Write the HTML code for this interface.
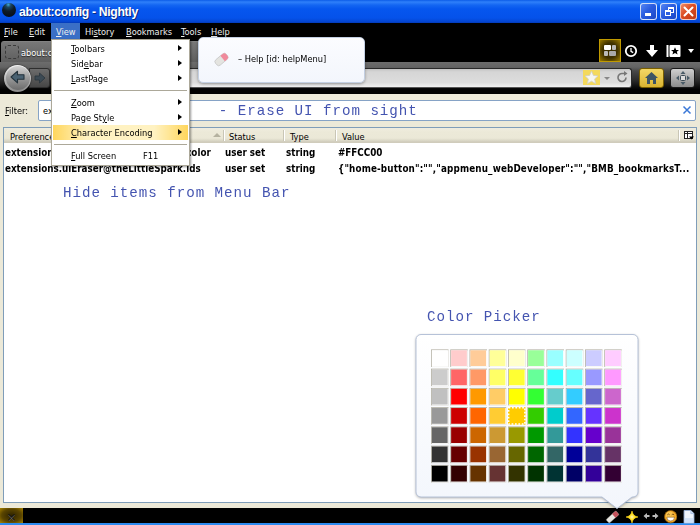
<!DOCTYPE html>
<html><head><meta charset="utf-8">
<style>
*{box-sizing:border-box;margin:0;padding:0}
html,body{width:700px;height:525px;overflow:hidden;background:#ece9d8;font-family:"DejaVu Sans Condensed","Liberation Sans",sans-serif;}
body{position:relative}
.abs{position:absolute}
#title{left:0;top:0;width:700px;height:23px;background:linear-gradient(#0c5ce8 0,#2f80fa 2px,#1466f2 5px,#0656ee 9px,#0552ea 18px,#0444d0 22px,#0338b0 23px)}
#title .t{left:19px;top:3.500px;font-family:"Liberation Sans",sans-serif;color:#fff;font-weight:bold;font-size:12.200px;letter-spacing:-0.320px;line-height:16px;white-space:nowrap;text-shadow:1px 1px 0 #0a2a80}
#menubar{left:0;top:23px;width:700px;height:17px;background:#000}
.mi{top:24px;height:16px;line-height:16px;color:#eee;font-size:9.2px;white-space:nowrap}
.mi u,.dm u{text-decoration:underline;text-underline-offset:1px}
#tabrow{left:0;top:40px;width:700px;height:22px;background:#000}
#tab{left:1px;top:41px;width:219px;height:21px;background:linear-gradient(#8c8c8c 0,#787878 1px,#5e5e5e 100%);border-radius:3px 3px 0 0}
#nav{left:0;top:62px;width:700px;height:31.500px;background:linear-gradient(#6c6c6c 0,#646464 5px,#484848 9px,#2c2c2c 18px,#0c0c0c 25px,#000 28px)}
#url{left:56px;top:67.500px;width:576px;height:20.500px;border-radius:3px;background:linear-gradient(#c4c4c4 0,#d6d6d6 3px,#dcdcdc 75%,#f0f0f0 100%);border:1px solid #2a2a2a;border-bottom-color:#555}
.dm{position:absolute;left:71px;font-size:9.2px;color:#000;white-space:nowrap;line-height:12px}
.arr{position:absolute;left:178px;width:0;height:0;border-left:4px solid #000;border-top:3.5px solid transparent;border-bottom:3.5px solid transparent}
.note{position:absolute;font-family:"Liberation Mono",monospace;font-size:14.2px;letter-spacing:0.960px;color:#4454b0;white-space:nowrap;line-height:18px}
.th{position:absolute;top:130.800px;font-size:9.2px;color:#000;line-height:12px}
.td{position:absolute;font-size:9.75px;font-weight:bold;color:#000;line-height:12px;white-space:nowrap}
.sep{position:absolute;top:130px;width:1px;height:11px;background:#c9c6b6;border-right:1px solid #fff;width:2px}
.cc{position:absolute;width:18px;height:18px;border:1px solid;border-color:#a9a69a #fff #fff #a9a69a}
.cc.sel{border:1.5px dotted #fff;}
</style></head><body><div id="ui" class="abs" style="left:0;top:0;width:700px;height:525px;filter:blur(0.45px)">

<!-- title bar -->
<div id="title" class="abs">
  <div class="abs" style="left:2px;top:3px;width:14px;height:14px;border-radius:50%;background:radial-gradient(circle at 45% 12%,#3fa8d8 0,#1c4660 18%,#0e1c2a 45%,#060a12 100%)"></div>
  <div class="abs t">about:config - Nightly</div>
  <!-- window buttons -->
  <div class="abs" style="left:640px;top:2.500px;width:17px;height:17px;border-radius:3px;border:1px solid rgba(255,255,255,.8);background:linear-gradient(135deg,#5686f4,#2a5ce0 45%,#1c48c6)"><div class="abs" style="left:3.500px;top:9px;width:6.500px;height:3px;background:#fff"></div></div>
  <div class="abs" style="left:660px;top:2.500px;width:17px;height:17px;border-radius:3px;border:1px solid rgba(255,255,255,.8);background:linear-gradient(135deg,#5686f4,#2a5ce0 45%,#1c48c6)">
    <div class="abs" style="left:6.500px;top:3px;width:6px;height:6px;border:1px solid #fff;border-top-width:2px"></div>
    <div class="abs" style="left:3.500px;top:6px;width:6px;height:6px;border:1px solid #fff;border-top-width:2px;background:#2c5fe0"></div>
  </div>
  <div class="abs" style="left:680px;top:2.500px;width:17px;height:17px;border-radius:3px;border:1px solid rgba(255,235,225,.75);background:linear-gradient(135deg,#ee8a66,#dc4c22 45%,#be3a16)">
    <svg class="abs" style="left:0;top:0" width="15" height="15" viewBox="0 0 15 15"><path d="M3.500 3.500L11.500 11.500M11.500 3.500L3.500 11.500" stroke="#fff" stroke-width="2" stroke-linecap="round"/></svg>
  </div>
</div>

<!-- menubar -->
<div id="menubar" class="abs"></div>
<div class="abs" style="left:51px;top:23px;width:29px;height:16px;background:#3a6fc6"></div>
<div class="abs mi" style="left:4px"><u>F</u>ile</div>
<div class="abs mi" style="left:29px"><u>E</u>dit</div>
<div class="abs mi" style="left:56px"><u>V</u>iew</div>
<div class="abs mi" style="left:85px">Hi<u>s</u>tory</div>
<div class="abs mi" style="left:126px"><u>B</u>ookmarks</div>
<div class="abs mi" style="left:181px"><u>T</u>ools</div>
<div class="abs mi" style="left:211px"><u>H</u>elp</div>

<!-- tab row -->
<div id="tabrow" class="abs"></div>
<div id="tab" class="abs">
  <div class="abs" style="left:4px;top:4px;width:13.500px;height:13.500px;border:1px dashed #3a3a3a;border-radius:3px"></div>
  <div class="abs" style="left:20px;top:4.500px;color:#fff;font-size:9.2px;line-height:14px;text-shadow:0 1px 1px #222">about:config</div>
</div>
<!-- tab row icons -->
<div class="abs" style="left:599px;top:39px;width:22px;height:23px;background:radial-gradient(ellipse at center,#3a2e00 0,#3e3000 50%,#9a7a00 100%);border:1px solid #c09a00"></div>
<svg class="abs" style="left:603px;top:44px" width="14" height="14" viewBox="0 0 14 14"><rect x="1" y="1" width="7" height="5" rx="1" fill="#fff"/><rect x="9" y="1" width="4" height="5" rx="1" fill="#bbb"/><rect x="1" y="7" width="4" height="5" rx="1" fill="#bbb"/><rect x="6" y="7" width="7" height="5" rx="1" fill="#aaa"/></svg>
<svg class="abs" style="left:624px;top:44px" width="14" height="14" viewBox="0 0 14 14"><circle cx="7" cy="7" r="5.2" fill="none" stroke="#fff" stroke-width="1.8"/><path d="M7 4V7.3L9.2 8.6" stroke="#fff" stroke-width="1.3" fill="none"/></svg>
<svg class="abs" style="left:645px;top:44px" width="14" height="14" viewBox="0 0 14 14"><path d="M5 1H9V6H13L7 13L1 6H5Z" fill="#fff"/></svg>
<svg class="abs" style="left:666px;top:44px" width="15" height="14" viewBox="0 0 15 14"><rect x="0.5" y="1" width="2" height="12" fill="#fff"/><rect x="3.5" y="1" width="11" height="12" rx="1" fill="#fff"/><path d="M9 3.2L10.2 6H13L10.8 7.8L11.6 10.6L9 9L6.4 10.6L7.2 7.8L5 6H7.8Z" fill="#000"/></svg>
<div class="abs" style="left:688px;top:49px;width:0;height:0;border-top:4px solid #fff;border-left:3.5px solid transparent;border-right:3.5px solid transparent"></div>

<!-- nav bar -->
<div id="nav" class="abs"></div>
<div id="url" class="abs"></div>
<!-- forward btn -->
<div class="abs" style="left:29px;top:68px;width:21px;height:19.500px;border-radius:0 3px 3px 0;background:linear-gradient(#6c6c6c,#464646);border:1px solid #2e2e2e"></div>
<svg class="abs" style="left:33.500px;top:71.500px" width="12" height="12" viewBox="0 0 12 12"><path d="M1 4H5.500V1L11 6L5.500 11V8H1Z" fill="#3c4a54" stroke="#2a353d" stroke-width="0.800" stroke-linejoin="round"/></svg>
<!-- back btn -->
<div class="abs" style="left:4px;top:64.500px;width:27px;height:27px;border-radius:50%;background:linear-gradient(#f4f4f4,#b0b0b0 60%,#8a8a8a);box-shadow:0 0 1.500px #000"></div><div class="abs" style="left:5.500px;top:66px;width:24px;height:24px;border-radius:50%;background:linear-gradient(#d4d4d4,#9a9a9a 50%,#6c6c6c)"></div>
<svg class="abs" style="left:10px;top:70px" width="15" height="14" viewBox="0 0 15 14"><path d="M14 4.800H7.500V1.200L1 7L7.500 12.800V9.200H14Z" fill="#4a6272" stroke="#25333c" stroke-width="1.100" stroke-linejoin="round"/></svg>
<!-- url bar right -->
<div class="abs" style="left:583px;top:70px;width:17px;height:15px;background:#f4d95c"></div>
<svg class="abs" style="left:584px;top:70px" width="15" height="15" viewBox="0 0 15 15"><path d="M7.5 1.2L9.4 5.4L14 5.9L10.6 9L11.6 13.6L7.5 11.2L3.4 13.6L4.4 9L1 5.9L5.6 5.4Z" fill="#f6f6f0" stroke="#cfcfc8" stroke-width="0.8"/></svg>
<div class="abs" style="left:604px;top:77px;width:0;height:0;border-top:3px solid #888;border-left:3px solid transparent;border-right:3px solid transparent"></div>
<svg class="abs" style="left:616px;top:71px" width="13" height="13" viewBox="0 0 13 13"><path d="M10 6.5A4 4 0 1 1 6.5 2.5H9" fill="none" stroke="#777" stroke-width="1.6"/><path d="M8 0V5L11.5 2.5Z" fill="#777"/></svg>
<!-- home -->
<div class="abs" style="left:639px;top:68px;width:25px;height:20px;border-radius:3px;background:linear-gradient(#f3d766,#d9b332);border:1px solid #7a5f00"></div>
<svg class="abs" style="left:644px;top:71px" width="15" height="14" viewBox="0 0 15 14"><path d="M7.5 1L14 7H12V13H9V9H6V13H3V7H1Z" fill="#3d5465"/></svg>
<!-- move -->
<div class="abs" style="left:670px;top:68px;width:25px;height:20px;border-radius:3px;background:linear-gradient(#cfcfcf,#8c8c8c);border:1px solid #1a1a1a"></div>
<svg class="abs" style="left:675px;top:70px" width="16" height="16" viewBox="0 0 16 16"><path d="M8 1L10.5 4H5.5ZM8 15L5.5 12H10.5ZM1 8L4 5.5V10.5ZM15 8L12 10.5V5.5Z" fill="#4a5c68"/><rect x="5.500" y="5.500" width="5" height="5" rx="1" fill="#dcdcdc" stroke="#3a4a55"/></svg>

<!-- content -->
<div class="abs" style="left:5px;top:105px;font-size:9.2px;line-height:12px;color:#000"><u>F</u>ilter:</div>
<div class="abs" style="left:38px;top:100px;width:658px;height:21px;background:#fff;border:1px solid #86a3c6;border-radius:2px"></div>
<div class="abs" style="left:43px;top:105px;font-size:9.2px;line-height:12px;color:#000">extensions</div>
<svg class="abs" style="left:682px;top:105px" width="10" height="10" viewBox="0 0 10 10"><path d="M1.5 1.5L8.5 8.5M8.5 1.5L1.5 8.5" stroke="#3a78d8" stroke-width="1.5"/></svg>

<!-- tree -->
<div class="abs" style="left:3px;top:127px;width:694px;height:376px;background:#fff;border:1px solid #7f9db9"></div>
<div class="abs" style="left:4px;top:128px;width:692px;height:15px;background:linear-gradient(#efecdf 0,#ece9d8 30%,#ebe8d7 72%,#dedbca 86%,#cfcbbb 100%);border-bottom:1px solid #d0ccbc"></div>
<div class="th" style="left:10px">Preference Name</div>
<div class="abs" style="left:213px;top:133px;width:0;height:0;border-bottom:4px solid #b5b2a0;border-left:4px solid transparent;border-right:4px solid transparent"></div>
<div class="sep" style="left:223px"></div><div class="th" style="left:229px">Status</div>
<div class="sep" style="left:283px"></div><div class="th" style="left:290px">Type</div>
<div class="sep" style="left:335px"></div><div class="th" style="left:342px">Value</div>
<div class="sep" style="left:677.500px"></div>
<svg class="abs" style="left:684px;top:131px" width="10" height="10" viewBox="0 0 10 10"><rect x="0.5" y="0.5" width="8" height="7" fill="#fff" stroke="#222"/><path d="M0.5 2.5H8.5M3.5 0.5V7.5" stroke="#222" stroke-width="1"/><path d="M5 5.5H10L7.5 8.5Z" fill="#000"/></svg>

<div class="td" style="left:5px;top:146.700px">extensions.uiEraser@theLittleSpark.color</div>
<div class="td" style="left:225px;top:146.700px">user set</div>
<div class="td" style="left:286px;top:146.700px">string</div>
<div class="td" style="left:338px;top:146.700px">#FFCC00</div>
<div class="td" style="left:5px;top:162.700px">extensions.uiEraser@theLittleSpark.ids</div>
<div class="td" style="left:225px;top:162.700px">user set</div>
<div class="td" style="left:286px;top:162.700px">string</div>
<div class="td" style="left:338px;top:162.700px;letter-spacing:0.150px">{"home-button":"","appmenu_webDeveloper":"","BMB_bookmarksT...</div>

<!-- notes -->

<!-- dropdown menu -->
<div class="abs" style="left:51px;top:39px;width:139px;height:127px;background:#fff;border:1px solid #aca899;box-shadow:1px 1px 2px rgba(0,0,0,.4)"></div>
<div class="abs" style="left:53px;top:125.300px;width:135px;height:14.300px;background:linear-gradient(90deg,#ffd65c,#fff2c2 25%,#fff2c2 75%,#ffd65c)"></div>
<div class="abs" style="left:54px;top:90px;width:133px;height:1px;background:#aca899"></div>
<div class="abs" style="left:54px;top:144px;width:133px;height:1px;background:#aca899"></div>
<div class="dm" style="top:43px"><u>T</u>oolbars</div><div class="arr" style="top:45px"></div>
<div class="dm" style="top:57.800px">Sid<u>e</u>bar</div><div class="arr" style="top:60px"></div>
<div class="dm" style="top:73px"><u>L</u>astPage</div><div class="arr" style="top:75px"></div>
<div class="dm" style="top:97px"><u>Z</u>oom</div><div class="arr" style="top:99px"></div>
<div class="dm" style="top:112px">Page St<u>y</u>le</div><div class="arr" style="top:114px"></div>
<div class="dm" style="top:127px"><u>C</u>haracter Encoding</div><div class="arr" style="top:129px"></div>
<div class="dm" style="top:150px"><u>F</u>ull Screen</div>
<div class="dm" style="top:150px;left:143px">F11</div>

<!-- help tooltip panel -->
<div class="abs" style="left:198px;top:36.500px;width:167px;height:46px;border-radius:5px;background:linear-gradient(#fbfcff,#f3f6fc);border:1px solid #c3cfe2;box-shadow:0 1px 3px rgba(0,0,0,.35)"></div>
<svg class="abs" style="left:213px;top:51px" width="17" height="17" viewBox="0 0 17 17"><g transform="rotate(-40 8.5 8.5)"><rect x="1.5" y="5" width="14" height="7" rx="2.5" fill="#e4e4e0" stroke="#bbb" stroke-width="0.6"/><path d="M10 5H13A2.5 2.5 0 0 1 15.5 7.5V9.5A2.5 2.5 0 0 1 13 12H10Z" fill="#f08a9c"/></g></svg>
<div class="abs" style="left:238px;top:53px;font-size:9.2px;line-height:12px;color:#000;white-space:nowrap">– Help [id: helpMenu]</div>

<!-- status bar -->
<div class="abs" style="left:0;top:508px;width:700px;height:15px;background:#000"></div>
<div class="abs" style="left:0;top:523px;width:700px;height:2px;background:#2d8cf0"></div>
<div class="abs" style="left:0;top:508px;width:23px;height:15px;background:radial-gradient(ellipse at center,#2e2300 0,#5a4500 60%,#a88400 100%)"></div>
<svg class="abs" style="left:8px;top:514px" width="7" height="7" viewBox="0 0 7 7"><path d="M0.5 0.5L6.5 6.5M6.5 0.5L0.5 6.5" stroke="#111" stroke-width="1.4"/><path d="M0.5 1.2L6.5 7.2M6.5 1.2L0.5 7.2" stroke="#999" stroke-width="0.5"/></svg>

<!-- color picker panel -->
<svg class="abs" style="left:406px;top:326px;overflow:visible" width="244" height="190" viewBox="406 326 244 190">
<defs><linearGradient id="pg" x1="0" y1="0" x2="0" y2="1"><stop offset="0" stop-color="#ffffff"/><stop offset="1" stop-color="#f3f6fc"/></linearGradient>
<filter id="sh" x="-10%" y="-10%" width="120%" height="125%"><feGaussianBlur stdDeviation="1.6"/></filter></defs>
<path d="M421 334.5H633A5 5 0 0 1 638 339.5V492A5 5 0 0 1 633 497H632L617 508.500L602 497H421A5 5 0 0 1 416 492V339.5A5 5 0 0 1 421 334.5Z" fill="#000" opacity="0.35" filter="url(#sh)" transform="translate(0,1)"/>
<path d="M421 334.5H633A5 5 0 0 1 638 339.5V492A5 5 0 0 1 633 497H632L617 508.500L602 497H421A5 5 0 0 1 416 492V339.5A5 5 0 0 1 421 334.5Z" fill="url(#pg)" stroke="#b6c2d8" stroke-width="1"/>
</svg>
<svg class="abs" style="left:0;top:0" width="700" height="525" viewBox="0 0 700 525">
<rect x="431.00" y="349.40" width="17.5" height="17.5" fill="#b5b2a6"/><rect x="431.88" y="350.28" width="16.62" height="16.62" fill="#fff"/><rect x="431.88" y="350.28" width="15.75" height="15.75" fill="#FFFFFF"/>
<rect x="450.25" y="349.40" width="17.5" height="17.5" fill="#b5b2a6"/><rect x="451.13" y="350.28" width="16.62" height="16.62" fill="#fff"/><rect x="451.13" y="350.28" width="15.75" height="15.75" fill="#FFCCCC"/>
<rect x="469.50" y="349.40" width="17.5" height="17.5" fill="#b5b2a6"/><rect x="470.38" y="350.28" width="16.62" height="16.62" fill="#fff"/><rect x="470.38" y="350.28" width="15.75" height="15.75" fill="#FFCC99"/>
<rect x="488.75" y="349.40" width="17.5" height="17.5" fill="#b5b2a6"/><rect x="489.63" y="350.28" width="16.62" height="16.62" fill="#fff"/><rect x="489.63" y="350.28" width="15.75" height="15.75" fill="#FFFF99"/>
<rect x="508.00" y="349.40" width="17.5" height="17.5" fill="#b5b2a6"/><rect x="508.88" y="350.28" width="16.62" height="16.62" fill="#fff"/><rect x="508.88" y="350.28" width="15.75" height="15.75" fill="#FFFFCC"/>
<rect x="527.25" y="349.40" width="17.5" height="17.5" fill="#b5b2a6"/><rect x="528.13" y="350.28" width="16.62" height="16.62" fill="#fff"/><rect x="528.13" y="350.28" width="15.75" height="15.75" fill="#99FF99"/>
<rect x="546.50" y="349.40" width="17.5" height="17.5" fill="#b5b2a6"/><rect x="547.38" y="350.28" width="16.62" height="16.62" fill="#fff"/><rect x="547.38" y="350.28" width="15.75" height="15.75" fill="#99FFFF"/>
<rect x="565.75" y="349.40" width="17.5" height="17.5" fill="#b5b2a6"/><rect x="566.63" y="350.28" width="16.62" height="16.62" fill="#fff"/><rect x="566.63" y="350.28" width="15.75" height="15.75" fill="#CCFFFF"/>
<rect x="585.00" y="349.40" width="17.5" height="17.5" fill="#b5b2a6"/><rect x="585.88" y="350.28" width="16.62" height="16.62" fill="#fff"/><rect x="585.88" y="350.28" width="15.75" height="15.75" fill="#CCCCFF"/>
<rect x="604.25" y="349.40" width="17.5" height="17.5" fill="#b5b2a6"/><rect x="605.13" y="350.28" width="16.62" height="16.62" fill="#fff"/><rect x="605.13" y="350.28" width="15.75" height="15.75" fill="#FFCCFF"/>
<rect x="431.00" y="368.65" width="17.5" height="17.5" fill="#b5b2a6"/><rect x="431.88" y="369.53" width="16.62" height="16.62" fill="#fff"/><rect x="431.88" y="369.53" width="15.75" height="15.75" fill="#CCCCCC"/>
<rect x="450.25" y="368.65" width="17.5" height="17.5" fill="#b5b2a6"/><rect x="451.13" y="369.53" width="16.62" height="16.62" fill="#fff"/><rect x="451.13" y="369.53" width="15.75" height="15.75" fill="#FF6666"/>
<rect x="469.50" y="368.65" width="17.5" height="17.5" fill="#b5b2a6"/><rect x="470.38" y="369.53" width="16.62" height="16.62" fill="#fff"/><rect x="470.38" y="369.53" width="15.75" height="15.75" fill="#FF9966"/>
<rect x="488.75" y="368.65" width="17.5" height="17.5" fill="#b5b2a6"/><rect x="489.63" y="369.53" width="16.62" height="16.62" fill="#fff"/><rect x="489.63" y="369.53" width="15.75" height="15.75" fill="#FFFF66"/>
<rect x="508.00" y="368.65" width="17.5" height="17.5" fill="#b5b2a6"/><rect x="508.88" y="369.53" width="16.62" height="16.62" fill="#fff"/><rect x="508.88" y="369.53" width="15.75" height="15.75" fill="#FFFF33"/>
<rect x="527.25" y="368.65" width="17.5" height="17.5" fill="#b5b2a6"/><rect x="528.13" y="369.53" width="16.62" height="16.62" fill="#fff"/><rect x="528.13" y="369.53" width="15.75" height="15.75" fill="#66FF99"/>
<rect x="546.50" y="368.65" width="17.5" height="17.5" fill="#b5b2a6"/><rect x="547.38" y="369.53" width="16.62" height="16.62" fill="#fff"/><rect x="547.38" y="369.53" width="15.75" height="15.75" fill="#33FFFF"/>
<rect x="565.75" y="368.65" width="17.5" height="17.5" fill="#b5b2a6"/><rect x="566.63" y="369.53" width="16.62" height="16.62" fill="#fff"/><rect x="566.63" y="369.53" width="15.75" height="15.75" fill="#66FFFF"/>
<rect x="585.00" y="368.65" width="17.5" height="17.5" fill="#b5b2a6"/><rect x="585.88" y="369.53" width="16.62" height="16.62" fill="#fff"/><rect x="585.88" y="369.53" width="15.75" height="15.75" fill="#9999FF"/>
<rect x="604.25" y="368.65" width="17.5" height="17.5" fill="#b5b2a6"/><rect x="605.13" y="369.53" width="16.62" height="16.62" fill="#fff"/><rect x="605.13" y="369.53" width="15.75" height="15.75" fill="#FF99FF"/>
<rect x="431.00" y="387.90" width="17.5" height="17.5" fill="#b5b2a6"/><rect x="431.88" y="388.78" width="16.62" height="16.62" fill="#fff"/><rect x="431.88" y="388.78" width="15.75" height="15.75" fill="#C0C0C0"/>
<rect x="450.25" y="387.90" width="17.5" height="17.5" fill="#b5b2a6"/><rect x="451.13" y="388.78" width="16.62" height="16.62" fill="#fff"/><rect x="451.13" y="388.78" width="15.75" height="15.75" fill="#FF0000"/>
<rect x="469.50" y="387.90" width="17.5" height="17.5" fill="#b5b2a6"/><rect x="470.38" y="388.78" width="16.62" height="16.62" fill="#fff"/><rect x="470.38" y="388.78" width="15.75" height="15.75" fill="#FF9900"/>
<rect x="488.75" y="387.90" width="17.5" height="17.5" fill="#b5b2a6"/><rect x="489.63" y="388.78" width="16.62" height="16.62" fill="#fff"/><rect x="489.63" y="388.78" width="15.75" height="15.75" fill="#FFCC66"/>
<rect x="508.00" y="387.90" width="17.5" height="17.5" fill="#b5b2a6"/><rect x="508.88" y="388.78" width="16.62" height="16.62" fill="#fff"/><rect x="508.88" y="388.78" width="15.75" height="15.75" fill="#FFFF00"/>
<rect x="527.25" y="387.90" width="17.5" height="17.5" fill="#b5b2a6"/><rect x="528.13" y="388.78" width="16.62" height="16.62" fill="#fff"/><rect x="528.13" y="388.78" width="15.75" height="15.75" fill="#33FF33"/>
<rect x="546.50" y="387.90" width="17.5" height="17.5" fill="#b5b2a6"/><rect x="547.38" y="388.78" width="16.62" height="16.62" fill="#fff"/><rect x="547.38" y="388.78" width="15.75" height="15.75" fill="#66CCCC"/>
<rect x="565.75" y="387.90" width="17.5" height="17.5" fill="#b5b2a6"/><rect x="566.63" y="388.78" width="16.62" height="16.62" fill="#fff"/><rect x="566.63" y="388.78" width="15.75" height="15.75" fill="#33CCFF"/>
<rect x="585.00" y="387.90" width="17.5" height="17.5" fill="#b5b2a6"/><rect x="585.88" y="388.78" width="16.62" height="16.62" fill="#fff"/><rect x="585.88" y="388.78" width="15.75" height="15.75" fill="#6666CC"/>
<rect x="604.25" y="387.90" width="17.5" height="17.5" fill="#b5b2a6"/><rect x="605.13" y="388.78" width="16.62" height="16.62" fill="#fff"/><rect x="605.13" y="388.78" width="15.75" height="15.75" fill="#CC66CC"/>
<rect x="431.00" y="407.15" width="17.5" height="17.5" fill="#b5b2a6"/><rect x="431.88" y="408.03" width="16.62" height="16.62" fill="#fff"/><rect x="431.88" y="408.03" width="15.75" height="15.75" fill="#999999"/>
<rect x="450.25" y="407.15" width="17.5" height="17.5" fill="#b5b2a6"/><rect x="451.13" y="408.03" width="16.62" height="16.62" fill="#fff"/><rect x="451.13" y="408.03" width="15.75" height="15.75" fill="#CC0000"/>
<rect x="469.50" y="407.15" width="17.5" height="17.5" fill="#b5b2a6"/><rect x="470.38" y="408.03" width="16.62" height="16.62" fill="#fff"/><rect x="470.38" y="408.03" width="15.75" height="15.75" fill="#FF6600"/>
<rect x="488.75" y="407.15" width="17.5" height="17.5" fill="#b5b2a6"/><rect x="489.63" y="408.03" width="16.62" height="16.62" fill="#fff"/><rect x="489.63" y="408.03" width="15.75" height="15.75" fill="#FFCC33"/>
<rect x="508.00" y="407.15" width="17.5" height="17.5" fill="#FFCC00"/>
<rect x="508.60" y="407.75" width="16.3" height="16.3" fill="none" stroke="#fff" stroke-width="1.600" stroke-dasharray="1.700 1.700"/>
<rect x="527.25" y="407.15" width="17.5" height="17.5" fill="#b5b2a6"/><rect x="528.13" y="408.03" width="16.62" height="16.62" fill="#fff"/><rect x="528.13" y="408.03" width="15.75" height="15.75" fill="#33CC00"/>
<rect x="546.50" y="407.15" width="17.5" height="17.5" fill="#b5b2a6"/><rect x="547.38" y="408.03" width="16.62" height="16.62" fill="#fff"/><rect x="547.38" y="408.03" width="15.75" height="15.75" fill="#00CCCC"/>
<rect x="565.75" y="407.15" width="17.5" height="17.5" fill="#b5b2a6"/><rect x="566.63" y="408.03" width="16.62" height="16.62" fill="#fff"/><rect x="566.63" y="408.03" width="15.75" height="15.75" fill="#3366FF"/>
<rect x="585.00" y="407.15" width="17.5" height="17.5" fill="#b5b2a6"/><rect x="585.88" y="408.03" width="16.62" height="16.62" fill="#fff"/><rect x="585.88" y="408.03" width="15.75" height="15.75" fill="#6633FF"/>
<rect x="604.25" y="407.15" width="17.5" height="17.5" fill="#b5b2a6"/><rect x="605.13" y="408.03" width="16.62" height="16.62" fill="#fff"/><rect x="605.13" y="408.03" width="15.75" height="15.75" fill="#CC33CC"/>
<rect x="431.00" y="426.40" width="17.5" height="17.5" fill="#b5b2a6"/><rect x="431.88" y="427.28" width="16.62" height="16.62" fill="#fff"/><rect x="431.88" y="427.28" width="15.75" height="15.75" fill="#666666"/>
<rect x="450.25" y="426.40" width="17.5" height="17.5" fill="#b5b2a6"/><rect x="451.13" y="427.28" width="16.62" height="16.62" fill="#fff"/><rect x="451.13" y="427.28" width="15.75" height="15.75" fill="#990000"/>
<rect x="469.50" y="426.40" width="17.5" height="17.5" fill="#b5b2a6"/><rect x="470.38" y="427.28" width="16.62" height="16.62" fill="#fff"/><rect x="470.38" y="427.28" width="15.75" height="15.75" fill="#CC6600"/>
<rect x="488.75" y="426.40" width="17.5" height="17.5" fill="#b5b2a6"/><rect x="489.63" y="427.28" width="16.62" height="16.62" fill="#fff"/><rect x="489.63" y="427.28" width="15.75" height="15.75" fill="#CC9933"/>
<rect x="508.00" y="426.40" width="17.5" height="17.5" fill="#b5b2a6"/><rect x="508.88" y="427.28" width="16.62" height="16.62" fill="#fff"/><rect x="508.88" y="427.28" width="15.75" height="15.75" fill="#999900"/>
<rect x="527.25" y="426.40" width="17.5" height="17.5" fill="#b5b2a6"/><rect x="528.13" y="427.28" width="16.62" height="16.62" fill="#fff"/><rect x="528.13" y="427.28" width="15.75" height="15.75" fill="#009900"/>
<rect x="546.50" y="426.40" width="17.5" height="17.5" fill="#b5b2a6"/><rect x="547.38" y="427.28" width="16.62" height="16.62" fill="#fff"/><rect x="547.38" y="427.28" width="15.75" height="15.75" fill="#339999"/>
<rect x="565.75" y="426.40" width="17.5" height="17.5" fill="#b5b2a6"/><rect x="566.63" y="427.28" width="16.62" height="16.62" fill="#fff"/><rect x="566.63" y="427.28" width="15.75" height="15.75" fill="#3333FF"/>
<rect x="585.00" y="426.40" width="17.5" height="17.5" fill="#b5b2a6"/><rect x="585.88" y="427.28" width="16.62" height="16.62" fill="#fff"/><rect x="585.88" y="427.28" width="15.75" height="15.75" fill="#6600CC"/>
<rect x="604.25" y="426.40" width="17.5" height="17.5" fill="#b5b2a6"/><rect x="605.13" y="427.28" width="16.62" height="16.62" fill="#fff"/><rect x="605.13" y="427.28" width="15.75" height="15.75" fill="#993399"/>
<rect x="431.00" y="445.65" width="17.5" height="17.5" fill="#b5b2a6"/><rect x="431.88" y="446.53" width="16.62" height="16.62" fill="#fff"/><rect x="431.88" y="446.53" width="15.75" height="15.75" fill="#333333"/>
<rect x="450.25" y="445.65" width="17.5" height="17.5" fill="#b5b2a6"/><rect x="451.13" y="446.53" width="16.62" height="16.62" fill="#fff"/><rect x="451.13" y="446.53" width="15.75" height="15.75" fill="#660000"/>
<rect x="469.50" y="445.65" width="17.5" height="17.5" fill="#b5b2a6"/><rect x="470.38" y="446.53" width="16.62" height="16.62" fill="#fff"/><rect x="470.38" y="446.53" width="15.75" height="15.75" fill="#993300"/>
<rect x="488.75" y="445.65" width="17.5" height="17.5" fill="#b5b2a6"/><rect x="489.63" y="446.53" width="16.62" height="16.62" fill="#fff"/><rect x="489.63" y="446.53" width="15.75" height="15.75" fill="#996633"/>
<rect x="508.00" y="445.65" width="17.5" height="17.5" fill="#b5b2a6"/><rect x="508.88" y="446.53" width="16.62" height="16.62" fill="#fff"/><rect x="508.88" y="446.53" width="15.75" height="15.75" fill="#666600"/>
<rect x="527.25" y="445.65" width="17.5" height="17.5" fill="#b5b2a6"/><rect x="528.13" y="446.53" width="16.62" height="16.62" fill="#fff"/><rect x="528.13" y="446.53" width="15.75" height="15.75" fill="#006600"/>
<rect x="546.50" y="445.65" width="17.5" height="17.5" fill="#b5b2a6"/><rect x="547.38" y="446.53" width="16.62" height="16.62" fill="#fff"/><rect x="547.38" y="446.53" width="15.75" height="15.75" fill="#336666"/>
<rect x="565.75" y="445.65" width="17.5" height="17.5" fill="#b5b2a6"/><rect x="566.63" y="446.53" width="16.62" height="16.62" fill="#fff"/><rect x="566.63" y="446.53" width="15.75" height="15.75" fill="#000099"/>
<rect x="585.00" y="445.65" width="17.5" height="17.5" fill="#b5b2a6"/><rect x="585.88" y="446.53" width="16.62" height="16.62" fill="#fff"/><rect x="585.88" y="446.53" width="15.75" height="15.75" fill="#333399"/>
<rect x="604.25" y="445.65" width="17.5" height="17.5" fill="#b5b2a6"/><rect x="605.13" y="446.53" width="16.62" height="16.62" fill="#fff"/><rect x="605.13" y="446.53" width="15.75" height="15.75" fill="#663366"/>
<rect x="431.00" y="464.90" width="17.5" height="17.5" fill="#b5b2a6"/><rect x="431.88" y="465.78" width="16.62" height="16.62" fill="#fff"/><rect x="431.88" y="465.78" width="15.75" height="15.75" fill="#000000"/>
<rect x="450.25" y="464.90" width="17.5" height="17.5" fill="#b5b2a6"/><rect x="451.13" y="465.78" width="16.62" height="16.62" fill="#fff"/><rect x="451.13" y="465.78" width="15.75" height="15.75" fill="#330000"/>
<rect x="469.50" y="464.90" width="17.5" height="17.5" fill="#b5b2a6"/><rect x="470.38" y="465.78" width="16.62" height="16.62" fill="#fff"/><rect x="470.38" y="465.78" width="15.75" height="15.75" fill="#663300"/>
<rect x="488.75" y="464.90" width="17.5" height="17.5" fill="#b5b2a6"/><rect x="489.63" y="465.78" width="16.62" height="16.62" fill="#fff"/><rect x="489.63" y="465.78" width="15.75" height="15.75" fill="#663333"/>
<rect x="508.00" y="464.90" width="17.5" height="17.5" fill="#b5b2a6"/><rect x="508.88" y="465.78" width="16.62" height="16.62" fill="#fff"/><rect x="508.88" y="465.78" width="15.75" height="15.75" fill="#333300"/>
<rect x="527.25" y="464.90" width="17.5" height="17.5" fill="#b5b2a6"/><rect x="528.13" y="465.78" width="16.62" height="16.62" fill="#fff"/><rect x="528.13" y="465.78" width="15.75" height="15.75" fill="#003300"/>
<rect x="546.50" y="464.90" width="17.5" height="17.5" fill="#b5b2a6"/><rect x="547.38" y="465.78" width="16.62" height="16.62" fill="#fff"/><rect x="547.38" y="465.78" width="15.75" height="15.75" fill="#003333"/>
<rect x="565.75" y="464.90" width="17.5" height="17.5" fill="#b5b2a6"/><rect x="566.63" y="465.78" width="16.62" height="16.62" fill="#fff"/><rect x="566.63" y="465.78" width="15.75" height="15.75" fill="#000066"/>
<rect x="585.00" y="464.90" width="17.5" height="17.5" fill="#b5b2a6"/><rect x="585.88" y="465.78" width="16.62" height="16.62" fill="#fff"/><rect x="585.88" y="465.78" width="15.75" height="15.75" fill="#330099"/>
<rect x="604.25" y="464.90" width="17.5" height="17.5" fill="#b5b2a6"/><rect x="605.13" y="465.78" width="16.62" height="16.62" fill="#fff"/><rect x="605.13" y="465.78" width="15.75" height="15.75" fill="#330033"/>
</svg>


<!-- status icons -->
<svg class="abs" style="left:605.400px;top:509.800px" width="15" height="14.100" viewBox="0 0 17 16"><g transform="rotate(-42 8.500 8)"><rect x="1" y="5.200" width="15" height="5.600" rx="1.200" fill="#e9e7e1" stroke="#8a8880" stroke-width="0.500"/><path d="M10.500 5.200H14.800A1.200 1.200 0 0 1 16 6.400V9.600A1.200 1.200 0 0 1 14.800 10.800H10.500Z" fill="#c4525a"/></g></svg>
<svg class="abs" style="left:626.100px;top:510.800px" width="12" height="12" viewBox="0 0 14 14"><defs><radialGradient id="sg"><stop offset="0" stop-color="#fff8c0"/><stop offset="0.350" stop-color="#ffe030"/><stop offset="1" stop-color="#ffd400"/></radialGradient></defs><path d="M7 0C7.800 4.200 9.800 6.200 14 7C9.800 7.800 7.800 9.800 7 14C6.200 9.800 4.200 7.800 0 7C4.200 6.200 6.200 4.200 7 0Z" fill="url(#sg)" stroke="#ffd81a" stroke-width="0.700"/></svg>
<svg class="abs" style="left:643px;top:512px" width="16" height="8" viewBox="0 0 16 8"><path d="M0.500 4L4 1V3H6.500V5H4V7ZM15.500 4L12 1V3H9.500V5H12V7Z" fill="#bbb"/></svg>
<svg class="abs" style="left:663.600px;top:510.300px" width="13.400" height="13.400" viewBox="0 0 14 14"><circle cx="7" cy="7" r="6.500" fill="#f0a828" stroke="#8a5a10" stroke-width="0.800"/><circle cx="6" cy="5.500" r="4" fill="#f8cc60" opacity="0.700"/><path d="M3 7.500H11A4 4 0 0 1 3 7.500Z" fill="#fff" stroke="#6a4008" stroke-width="0.500"/><path d="M3.500 5Q4.700 3.500 5.900 5M8.100 5Q9.300 3.500 10.500 5" stroke="#5a3408" stroke-width="0.800" fill="none"/></svg>
<svg class="abs" style="left:683.300px;top:510.400px" width="12" height="13.500" viewBox="0 0 13 15"><path d="M1 0.500H8.500L12 4V14.500H1Z" fill="#eef4fc" stroke="#9ab4dc" stroke-width="1"/><path d="M8.500 0.500V4H12" fill="#cfe0f5" stroke="#9ab4dc" stroke-width="0.800"/><path d="M1.500 9H11.500V14H1.500Z" fill="#c8dcf5" opacity="0.800"/></svg>
</div>
<!-- annotations -->
<div class="note" style="left:218.800px;top:102px">- Erase UI from sight</div>
<div class="note" style="left:63px;top:184px">Hide items from Menu Bar</div>
<div class="note" style="left:427px;top:308px">Color Picker</div>
</body></html>
